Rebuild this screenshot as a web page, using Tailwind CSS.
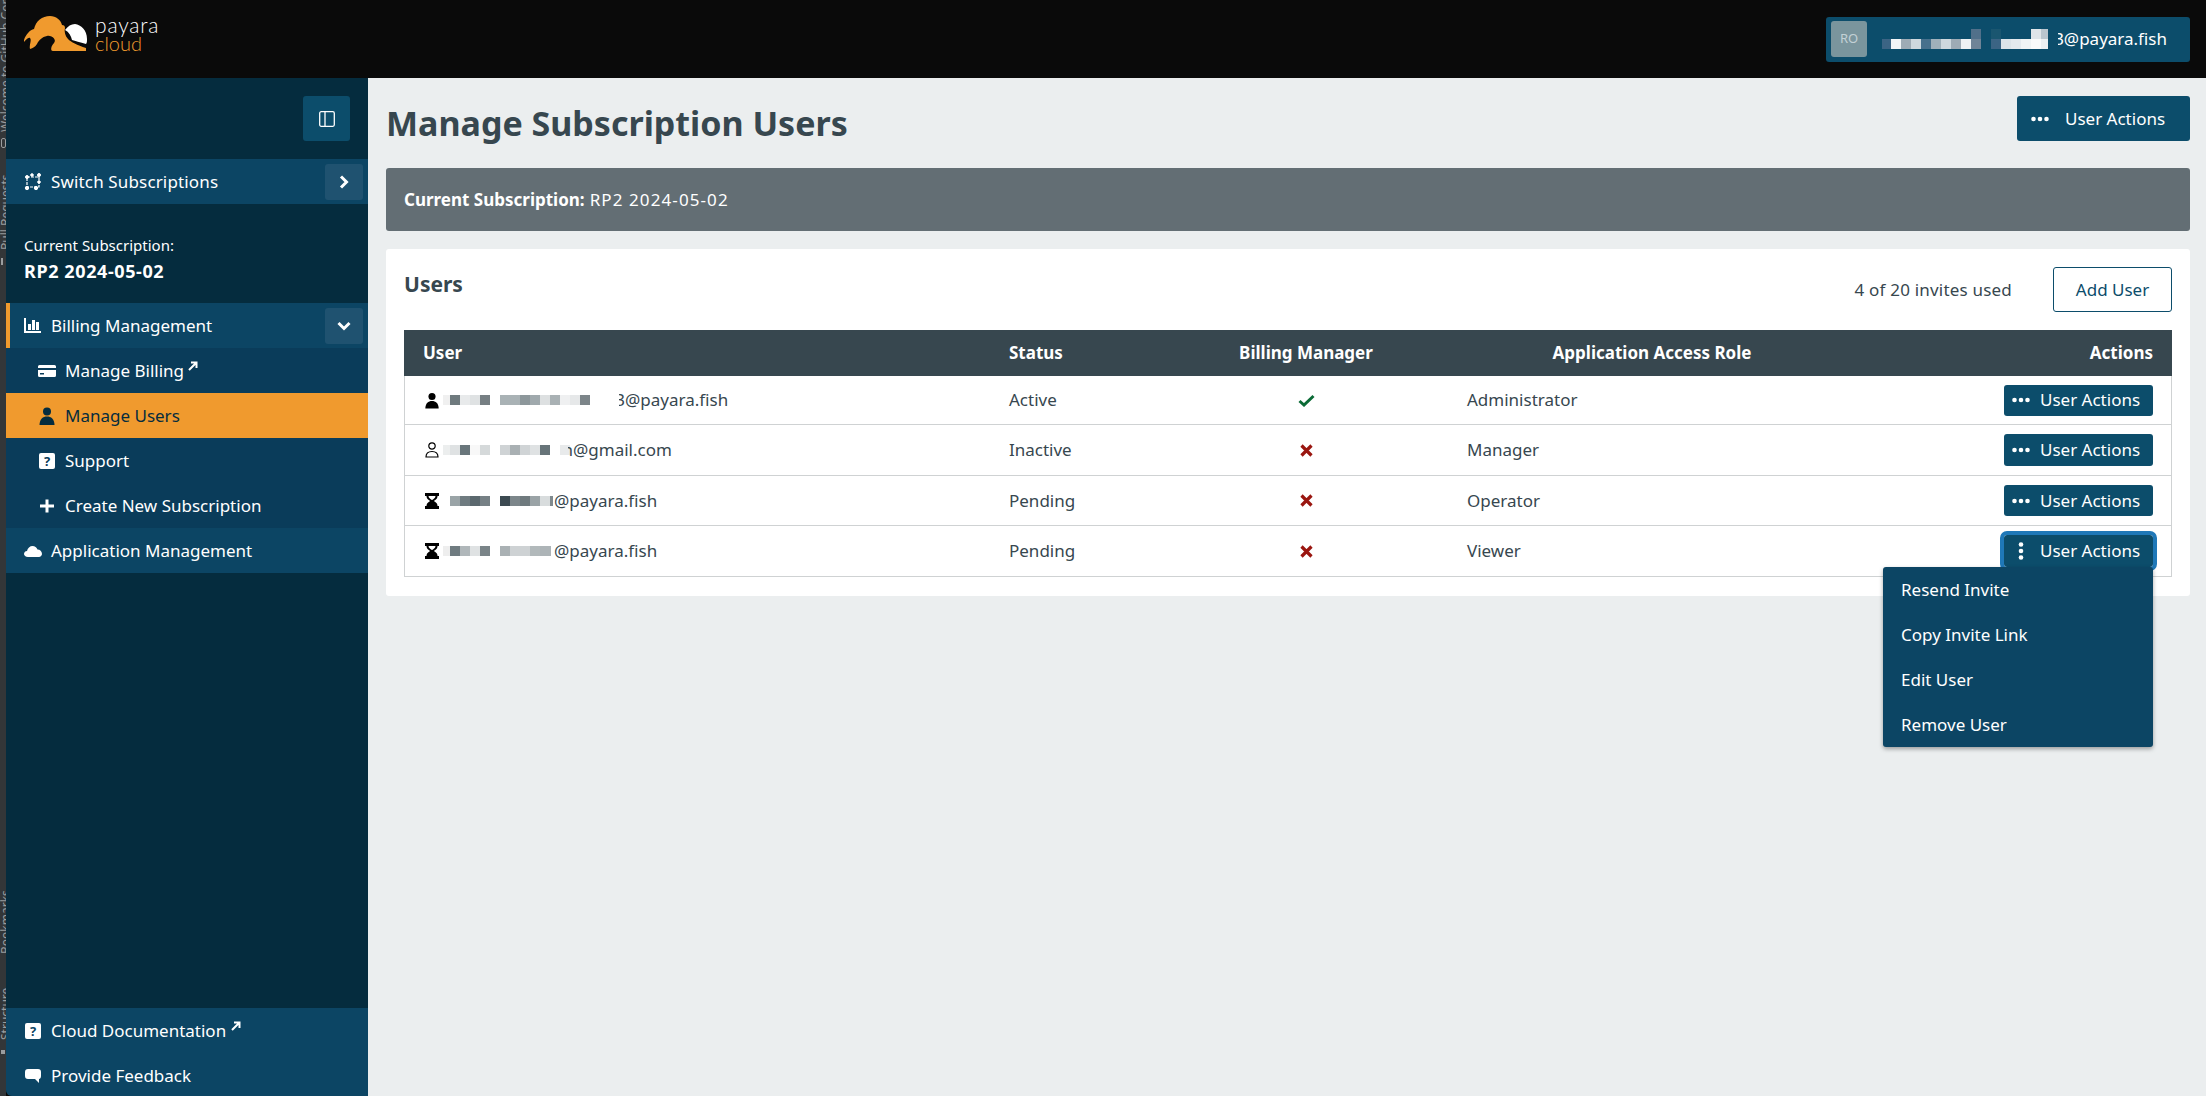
<!DOCTYPE html>
<html lang="en">
<head>
  <meta charset="UTF-8" />
  <title>Manage Subscription Users</title>
  <script src="https://cdn.jsdelivr.net/npm/@tailwindcss/browser@4"></script>
</head>
<body class="h-[1096px] w-[2206px] overflow-hidden bg-[#0a0a0a] font-['Noto_Sans',sans-serif] text-[17px] text-[#37474f] flex">

  <!-- editor tool strip cut off at the window edge -->
  <div class="w-[6px] h-full bg-[#333638] overflow-hidden relative shrink-0 text-[#9a9d9f] text-[12px] leading-[12px] whitespace-nowrap">
    <div class="absolute left-0 top-0 h-[132px] [writing-mode:vertical-rl] rotate-180">Welcome to GitHub Copilot</div>
    <div class="absolute left-[1px] top-[138px] w-[5px] h-[10px] rounded-[2px] border border-[#9a9d9f]"></div>
    <div class="absolute left-0 top-[176px] h-[74px] [writing-mode:vertical-rl] rotate-180">Pull Requests</div>
    <div class="absolute left-[1px] top-[258px] w-[5px] h-[7px] border-l-2 border-[#9a9d9f]"></div>
    <div class="absolute left-0 top-[884px] h-[70px] [writing-mode:vertical-rl] rotate-180">Bookmarks</div>
    <div class="absolute left-0 top-[985px] h-[55px] [writing-mode:vertical-rl] rotate-180">Structure</div>
    <div class="absolute left-[1px] top-[1050px] w-[4px] h-[4px] bg-[#9a9d9f]"></div>
  </div>

  <div class="flex-1 flex flex-col min-w-0">
    <!-- top bar -->
    <header class="h-[78px] shrink-0 bg-[#0a0a0a] flex items-center justify-between pl-[18px] pr-[16px]">
      <div class="flex items-center gap-[8px] pb-[11px]">
        <svg width="63" height="35" viewBox="0 0 63 35">
          <path fill="#f09a2e" d="M0 24C2 18 6 14 10 13C12 5 18 0 26 0C32 0 37 4 38 9C40 9 41 10 41 12C40 15 41 20 44 23C47 26 53 29 62 32L62 35L29 35C26 35 27 30 30 27C33 24 28 19 23 20C18 21 15 24 13 28C11 31 9 32 6 33C5 29 8 24 6 22C4 21 2 24 0 26Z" />
          <path fill="#fff" d="M41 14C44 10 47 8 51 8C57 9 63 14 63 23C63 25 63 27 62 28C56 26 51 25 48 24C47 20 45 16 41 14Z" />
        </svg>
        <div class="font-['Lato',sans-serif] font-light leading-[18px]">
          <div class="text-white text-[21px] tracking-[0.8px]">payara</div>
          <div class="text-[#f09a2e] text-[20px]">cloud</div>
        </div>
      </div>
      <div class="w-[364px] h-[45px] bg-[#0c4d6b] rounded-[3px] flex items-center pl-[5px] pr-[23px] text-white">
        <div class="w-[36px] h-[36px] rounded-[3px] bg-[#7a959d] text-[#c3d1d5] text-[13px] flex items-center justify-center">RO</div>
        <svg class="ml-[15px]" width="166" height="20" viewBox="0 0 166 20">
          <rect x="0" y="10" width="9" height="10" fill="#3b6484"/><rect x="9" y="10" width="10" height="10" fill="#f2f5f7"/><rect x="19" y="10" width="10" height="10" fill="#9eabb5"/><rect x="29" y="10" width="10" height="10" fill="#ced8de"/><rect x="39" y="10" width="10" height="10" fill="#47708c"/><rect x="49" y="10" width="10" height="10" fill="#9fb0ba"/><rect x="59" y="10" width="10" height="10" fill="#ced8de"/><rect x="69" y="10" width="10" height="10" fill="#9eabb5"/><rect x="79" y="10" width="10" height="10" fill="#eef2f4"/><rect x="89" y="10" width="10" height="10" fill="#6f8497"/><rect x="89" y="0" width="10" height="10" fill="#51708a"/>
          <rect x="109" y="0" width="10" height="10" fill="#1a5670"/><rect x="109" y="10" width="10" height="10" fill="#3b6484"/><rect x="119" y="10" width="10" height="10" fill="#dce4e9"/><rect x="129" y="10" width="10" height="10" fill="#e4eaee"/><rect x="139" y="10" width="10" height="10" fill="#f0f4f5"/><rect x="149" y="0" width="10" height="10" fill="#dfe5e9"/><rect x="149" y="10" width="10" height="10" fill="#fafbfb"/><rect x="159" y="0" width="7" height="10" fill="#b9c5ce"/><rect x="159" y="10" width="7" height="10" fill="#ecf0f2"/>
        </svg>
        <span class="ml-auto w-[6px] overflow-hidden flex justify-end">3</span>
        <span>@payara.fish</span>
      </div>
    </header>

    <div class="flex-1 flex min-h-0">
      <!-- sidebar -->
      <aside class="w-[362px] shrink-0 bg-[#052c3e] text-white flex flex-col rounded-bl-[6px] overflow-hidden">
        <div class="h-[81px] pt-[18px] pr-[18px] flex justify-end">
          <button class="w-[47px] h-[45px] bg-[#0c4d6b] rounded-[3px] flex items-center justify-center">
            <svg width="16" height="16" viewBox="0 0 16 16" fill="none" stroke="#fff" stroke-width="1.3"><rect x="0.7" y="0.7" width="14.6" height="14.6" rx="1.5"/><path d="M6 1V15"/></svg>
          </button>
        </div>
        <div class="h-[45px] bg-[#0c4564] flex items-center pl-[18px] pr-[5px]">
          <svg width="18" height="18" viewBox="0 0 18 18" fill="#fff" stroke="#fff"><path fill="none" stroke-width="1.2" stroke-dasharray="3 1" d="M3 4H15V14H3Z"/><circle cx="3" cy="4" r="1.500"/><circle cx="8" cy="2" r="1.300"/><circle cx="15" cy="2" r="1.500"/><circle cx="15" cy="9" r="1.300"/><circle cx="3" cy="15" r="1.700"/><circle cx="12" cy="15" r="1.700"/></svg>
          <span class="ml-[9px] tracking-[0.15px]">Switch Subscriptions</span>
          <button class="ml-auto w-[38px] h-[36px] rounded-[3px] bg-[#1f5270] flex items-center justify-center">
            <svg width="10" height="14" viewBox="0 0 10 14" fill="none" stroke="#fff" stroke-width="3"><path d="M2 1.5L7.5 7L2 12.5"/></svg>
          </button>
        </div>
        <div class="h-[99px] pl-[18px] pt-[30px]">
          <div class="text-[15px] leading-[22px]">Current Subscription:</div>
          <div class="font-bold text-[18px] tracking-[0.6px] leading-[30px]">RP2 2024-05-02</div>
        </div>
        <div class="h-[45px] bg-[#0c4564] flex items-center pl-[14px] pr-[5px] border-l-[4px] border-[#f09a2e]">
          <svg width="17" height="15" viewBox="0 0 17 15" fill="#fff"><path d="M0 0H2V13H17V15H0Z"/><rect x="4" y="6" width="3" height="6"/><rect x="8" y="2" width="3" height="10"/><rect x="12" y="4" width="3" height="8"/></svg>
          <span class="ml-[10px]">Billing Management</span>
          <button class="ml-auto w-[38px] h-[36px] rounded-[3px] bg-[#1f5270] flex items-center justify-center">
            <svg width="14" height="10" viewBox="0 0 14 10" fill="none" stroke="#fff" stroke-width="3"><path d="M1.5 2L7 7.5L12.5 2"/></svg>
          </button>
        </div>
        <div class="bg-[#0a3c5a]">
          <div class="h-[45px] flex items-center pl-[32px]">
            <svg class="w-[18px]" width="18" height="12" viewBox="0 0 18 12" fill="#fff"><path fill-rule="evenodd" d="M1.5 0H16.5A1.5 1.5 0 0 1 18 1.500V10.500A1.500 1.500 0 0 1 16.500 12H1.500A1.500 1.500 0 0 1 0 10.500V1.500A1.500 1.500 0 0 1 1.500 0ZM0 3V5H18V3ZM2 8V9.500H6V8Z"/></svg>
            <span class="ml-[9px]">Manage Billing</span>
            <svg class="ml-[4px] mb-[10px]" width="10" height="10" viewBox="0 0 10 10" fill="none" stroke="#fff" stroke-width="2"><path d="M1 9L8 2M3 1.500H8.500V7"/></svg>
          </div>
          <div class="h-[45px] flex items-center pl-[32px] bg-[#f09a2e] text-[#052c3e]">
            <svg width="18" height="18" viewBox="0 0 18 18" fill="#052c3e"><circle cx="9" cy="4.500" r="4"/><path d="M1.500 18C1.500 12 5 9.500 9 9.500C13 9.500 16.500 12 16.500 18Z"/></svg>
            <span class="ml-[9px]">Manage Users</span>
          </div>
          <div class="h-[45px] flex items-center pl-[33px]">
            <span class="w-[16px] h-[16px] bg-white rounded-[2px] text-[#0a3c5a] text-[13px] leading-[16px] font-bold text-center">?</span>
            <span class="ml-[10px]">Support</span>
          </div>
          <div class="h-[45px] flex items-center pl-[33px]">
            <svg width="16" height="16" viewBox="0 0 16 16" stroke="#fff" stroke-width="3"><path d="M8 1.500V14.500M1 8H15"/></svg>
            <span class="ml-[10px]">Create New Subscription</span>
          </div>
        </div>
        <div class="h-[45px] bg-[#0c4564] flex items-center pl-[18px]">
          <svg width="18" height="12" viewBox="0 0 18 12" fill="#fff"><path d="M4 12C1.500 12 0 10.500 0 9C0 7.500 1 6 3 6C3.500 3 6 1 8.500 1C11 1 12.500 2.500 13.500 4.500C16 4.500 18 6.500 18 9C18 10.500 16.500 12 15 12Z"/></svg>
          <span class="ml-[9px]">Application Management</span>
        </div>
        <div class="mt-auto h-[88px] shrink-0 overflow-hidden bg-[#0c4564]">
          <div class="h-[45px] flex items-center pl-[19px]">
            <span class="w-[16px] h-[16px] bg-white rounded-[2px] text-[#0c4564] text-[13px] leading-[16px] font-bold text-center">?</span>
            <span class="ml-[10px]">Cloud Documentation</span>
            <svg class="ml-[5px] mb-[10px]" width="10" height="10" viewBox="0 0 10 10" fill="none" stroke="#fff" stroke-width="2"><path d="M1 9L8 2M3 1.500H8.500V7"/></svg>
          </div>
          <div class="h-[45px] flex items-center pl-[19px]">
            <svg width="16" height="14" viewBox="0 0 16 14" fill="#fff"><path d="M3 0H13C15 0 16 1 16 3V7C16 9 15 10 14 10V14L10 10H3C1 10 0 9 0 7V3C0 1 1 0 3 0Z"/></svg>
            <span class="ml-[10px]">Provide Feedback</span>
          </div>
        </div>
      </aside>

      <!-- page -->
      <main class="flex-1 bg-[#ebeeef] pl-[18px] pr-[16px] min-w-0">
        <div class="h-[90px] pt-[18px] flex justify-between items-start">
          <h1 class="font-bold text-[34px] leading-[54px] text-[#37474f]">Manage Subscription Users</h1>
          <button class="w-[173px] h-[45px] bg-[#0c4d6b] rounded-[3px] text-white flex items-center pl-[14px]">
            <svg width="18" height="6" viewBox="0 0 18 6" fill="#fff"><circle cx="2.500" cy="3" r="2.300"/><circle cx="9" cy="3" r="2.300"/><circle cx="15.500" cy="3" r="2.300"/></svg>
            <span class="ml-[16px]">User Actions</span>
          </button>
        </div>
        <div class="h-[63px] bg-[#636e74] rounded-[3px] text-white flex items-center pl-[18px]"><b class="font-bold">Current Subscription:</b><span class="ml-[5px] tracking-[1.1px]">RP2 2024-05-02</span></div>
        <section class="mt-[18px] h-[347px] bg-white rounded-[3px] px-[18px] pt-[18px]">
          <div class="h-[45px] flex items-start justify-between">
            <h2 class="font-bold text-[21px] leading-[34px]">Users</h2>
            <div class="flex items-center">
              <span class="mr-[41px] tracking-[0.2px]">4 of 20 invites used</span>
              <button class="w-[119px] h-[45px] border border-[#0c4d6b] rounded-[3px] text-[#0c4d6b] bg-white">Add User</button>
            </div>
          </div>
          <table class="mt-[18px] w-[1768px] table-fixed border-separate border-spacing-0">
            <thead>
              <tr class="h-[46px] bg-[#37474f] text-white">
                <th class="w-[586px] pl-[19px] text-left font-bold">User</th>
                <th class="w-[174px] pl-[19px] text-left font-bold">Status</th>
                <th class="w-[284px] text-center font-bold">Billing Manager</th>
                <th class="w-[408px] text-center font-bold">Application Access Role</th>
                <th class="w-[316px] pr-[19px] text-right font-bold">Actions</th>
              </tr>
            </thead>
            <tbody>
              <tr class="h-[49px]">
                <td class="border-b border-l border-[#cfd2d3] pl-[19px]">
                  <div class="flex items-center">
                    <svg class="w-[16px]" width="16" height="17" viewBox="0 0 18 18" fill="#000"><circle cx="9" cy="4.500" r="4"/><path d="M1.500 18C1.500 12 5 9.500 9 9.500C13 9.500 16.500 12 16.500 18Z"/></svg>
                    <svg class="ml-[3px]" width="147" height="10" viewBox="0 0 147 10"><rect x="0" width="7" height="10" fill="#f0f0f0"/><rect x="7" width="10" height="10" fill="#6f7a7e"/><rect x="17" width="10" height="10" fill="#e8eaeb"/><rect x="27" width="10" height="10" fill="#dfe2e3"/><rect x="37" width="10" height="10" fill="#767f83"/><rect x="57" width="20" height="10" fill="#a9b2b5"/><rect x="77" width="10" height="10" fill="#8d979b"/><rect x="87" width="10" height="10" fill="#a0a9ad"/><rect x="97" width="10" height="10" fill="#dde0e1"/><rect x="107" width="10" height="10" fill="#a9b1b4"/><rect x="117" width="10" height="10" fill="#eff0f1"/><rect x="127" width="10" height="10" fill="#e6e8e9"/><rect x="137" width="10" height="10" fill="#7c8589"/></svg>
                    <span class="ml-[29px] w-[6px] overflow-hidden flex justify-end">3</span>
                    <span>@payara.fish</span>
                  </div>
                </td>
                <td class="border-b border-[#cfd2d3] pl-[19px]">Active</td>
                <td class="border-b border-[#cfd2d3]"><svg class="mx-auto" width="17" height="13" viewBox="0 0 17 13" fill="none" stroke="#0b6b36" stroke-width="3"><path d="M1.500 7L6 11L15.500 2"/></svg></td>
                <td class="border-b border-[#cfd2d3] pl-[19px]">Administrator</td>
                <td class="border-b border-r border-[#cfd2d3] pr-[18px]">
                  <button class="ml-auto w-[149px] h-[31px] bg-[#0c4d6b] rounded-[3px] text-white flex items-center pl-[8px]">
                    <svg width="18" height="6" viewBox="0 0 18 6" fill="#fff"><circle cx="2.500" cy="3" r="2.300"/><circle cx="9" cy="3" r="2.300"/><circle cx="15.500" cy="3" r="2.300"/></svg>
                    <span class="ml-[10px]">User Actions</span>
                  </button>
                </td>
              </tr>
              <tr class="h-[51px]">
                <td class="border-b border-l border-[#cfd2d3] pl-[19px]">
                  <div class="flex items-center">
                    <svg class="w-[16px]" width="14" height="16" viewBox="0 0 14 16" fill="none" stroke="#000" stroke-width="1.200"><circle cx="7" cy="4" r="3.200"/><path d="M1 15C1 11 3 9.500 7 9.500C11 9.500 13 11 13 15Z"/></svg>
                    <svg class="ml-[3px]" width="127" height="10" viewBox="0 0 127 10"><rect x="0" width="7" height="10" fill="#eceeee"/><rect x="7" width="10" height="10" fill="#dfe2e3"/><rect x="17" width="10" height="10" fill="#69767b"/><rect x="27" width="10" height="10" fill="#f8f8f8"/><rect x="37" width="10" height="10" fill="#d5d9da"/><rect x="57" width="10" height="10" fill="#cfd3d5"/><rect x="67" width="10" height="10" fill="#a9b0b3"/><rect x="77" width="10" height="10" fill="#d0d4d6"/><rect x="87" width="10" height="10" fill="#dfe2e3"/><rect x="97" width="10" height="10" fill="#677479"/><rect x="117" width="10" height="10" fill="#e8eaeb"/></svg>
                    <span class="ml-[-2px] w-[5px] overflow-hidden flex justify-end">n</span>
                    <span>@gmail.com</span>
                  </div>
                </td>
                <td class="border-b border-[#cfd2d3] pl-[19px]">Inactive</td>
                <td class="border-b border-[#cfd2d3]"><svg class="mx-auto" width="13" height="13" viewBox="0 0 13 13" stroke="#9a1610" stroke-width="3.200"><path d="M1.500 1.500L11.500 11.500M11.500 1.500L1.500 11.500"/></svg></td>
                <td class="border-b border-[#cfd2d3] pl-[19px]">Manager</td>
                <td class="border-b border-r border-[#cfd2d3] pr-[18px]">
                  <button class="ml-auto w-[149px] h-[32px] bg-[#0c4d6b] rounded-[3px] text-white flex items-center pl-[8px]">
                    <svg width="18" height="6" viewBox="0 0 18 6" fill="#fff"><circle cx="2.500" cy="3" r="2.300"/><circle cx="9" cy="3" r="2.300"/><circle cx="15.500" cy="3" r="2.300"/></svg>
                    <span class="ml-[10px]">User Actions</span>
                  </button>
                </td>
              </tr>
              <tr class="h-[50px]">
                <td class="border-b border-l border-[#cfd2d3] pl-[19px]">
                  <div class="flex items-center">
                    <svg class="w-[16px]" width="14" height="16" viewBox="0 0 14 16" fill="#000"><path fill-rule="evenodd" d="M0 0H14V3H12.500C12.500 6 10 7 9 8C10 9 12.500 10 12.500 13H14V16H0V13H1.500C1.500 10 4 9 5 8C4 7 1.500 6 1.500 3H0ZM3.500 3C3.500 5 6 6.500 7 7C8 6.500 10.500 5 10.500 3Z"/></svg>
                    <svg class="ml-[3px]" width="110" height="10" viewBox="0 0 110 10"><rect x="7" width="10" height="10" fill="#9aa4a7"/><rect x="17" width="10" height="10" fill="#6f7b80"/><rect x="27" width="10" height="10" fill="#5b686e"/><rect x="37" width="10" height="10" fill="#768085"/><rect x="57" width="10" height="10" fill="#3c4a51"/><rect x="67" width="10" height="10" fill="#7c868a"/><rect x="77" width="10" height="10" fill="#6f7a7e"/><rect x="87" width="10" height="10" fill="#9aa3a6"/><rect x="97" width="10" height="10" fill="#d8dcdd"/><rect x="107" width="3" height="10" fill="#7f898d"/></svg>
                    <span class="ml-[1px]">@payara.fish</span>
                  </div>
                </td>
                <td class="border-b border-[#cfd2d3] pl-[19px]">Pending</td>
                <td class="border-b border-[#cfd2d3]"><svg class="mx-auto" width="13" height="13" viewBox="0 0 13 13" stroke="#9a1610" stroke-width="3.200"><path d="M1.500 1.500L11.500 11.500M11.500 1.500L1.500 11.500"/></svg></td>
                <td class="border-b border-[#cfd2d3] pl-[19px]">Operator</td>
                <td class="border-b border-r border-[#cfd2d3] pr-[18px]">
                  <button class="ml-auto w-[149px] h-[31px] bg-[#0c4d6b] rounded-[3px] text-white flex items-center pl-[8px]">
                    <svg width="18" height="6" viewBox="0 0 18 6" fill="#fff"><circle cx="2.500" cy="3" r="2.300"/><circle cx="9" cy="3" r="2.300"/><circle cx="15.500" cy="3" r="2.300"/></svg>
                    <span class="ml-[10px]">User Actions</span>
                  </button>
                </td>
              </tr>
              <tr class="h-[51px]">
                <td class="border-b border-l border-[#cfd2d3] pl-[19px]">
                  <div class="flex items-center">
                    <svg class="w-[16px]" width="14" height="16" viewBox="0 0 14 16" fill="#000"><path fill-rule="evenodd" d="M0 0H14V3H12.500C12.500 6 10 7 9 8C10 9 12.500 10 12.500 13H14V16H0V13H1.500C1.500 10 4 9 5 8C4 7 1.500 6 1.500 3H0ZM3.500 3C3.500 5 6 6.500 7 7C8 6.500 10.500 5 10.500 3Z"/></svg>
                    <svg class="ml-[3px]" width="108" height="10" viewBox="0 0 108 10"><rect x="0" width="7" height="10" fill="#eee"/><rect x="7" width="10" height="10" fill="#6f7b80"/><rect x="17" width="10" height="10" fill="#b0b7ba"/><rect x="27" width="10" height="10" fill="#dfe2e3"/><rect x="37" width="10" height="10" fill="#7a8488"/><rect x="57" width="10" height="10" fill="#aab1b4"/><rect x="67" width="20" height="10" fill="#ced2d4"/><rect x="87" width="10" height="10" fill="#b2b9bb"/><rect x="97" width="11" height="10" fill="#adb4b7"/></svg>
                    <span class="ml-[3px]">@payara.fish</span>
                  </div>
                </td>
                <td class="border-b border-[#cfd2d3] pl-[19px]">Pending</td>
                <td class="border-b border-[#cfd2d3]"><svg class="mx-auto" width="13" height="13" viewBox="0 0 13 13" stroke="#9a1610" stroke-width="3.200"><path d="M1.500 1.500L11.500 11.500M11.500 1.500L1.500 11.500"/></svg></td>
                <td class="border-b border-[#cfd2d3] pl-[19px]">Viewer</td>
                <td class="border-b border-r border-[#cfd2d3] pr-[18px]">
                  <div class="relative ml-auto w-[149px]">
                    <button class="w-[149px] h-[32px] bg-[#0c4d6b] rounded-[3px] text-white flex items-center pl-[8px] outline-[4px] outline-[#1f78b8]">
                      <svg class="w-[18px]" width="18" height="18" viewBox="0 0 18 18" fill="#fff"><circle cx="9" cy="2.500" r="2.300"/><circle cx="9" cy="9" r="2.300"/><circle cx="9" cy="15.500" r="2.300"/></svg>
                      <span class="ml-[10px]">User Actions</span>
                    </button>
                    <ul class="absolute right-0 top-[32px] w-[270px] bg-[#0c4564] text-white rounded-[3px] shadow-[0_2px_4px_rgba(0,0,0,0.35)]">
                      <li class="h-[45px] flex items-center pl-[18px]">Resend Invite</li>
                      <li class="h-[45px] flex items-center pl-[18px]">Copy Invite Link</li>
                      <li class="h-[45px] flex items-center pl-[18px]">Edit User</li>
                      <li class="h-[45px] flex items-center pl-[18px]">Remove User</li>
                    </ul>
                  </div>
                </td>
              </tr>
            </tbody>
          </table>
        </section>
      </main>
    </div>
  </div>
</body>
</html>
